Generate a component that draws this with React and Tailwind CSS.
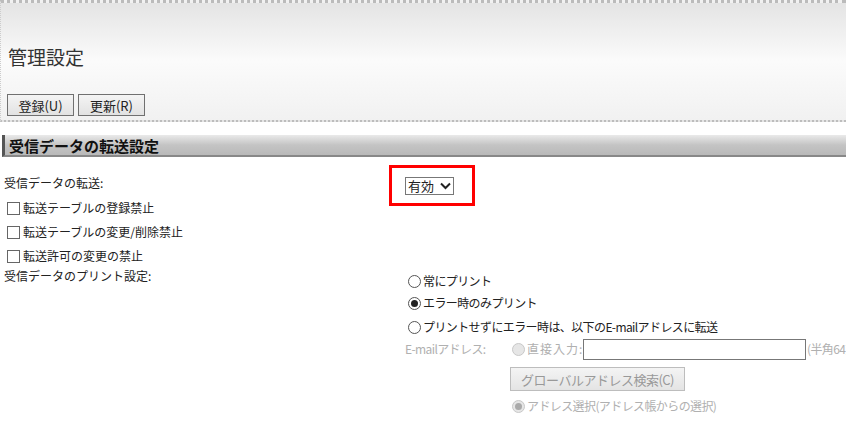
import React from 'react';

const font = { fontFamily: '"Noto Sans CJK JP", "Liberation Sans", sans-serif' };

function Radio({ checked, disabled }) {
  return (
    <span
      className={`inline-flex h-[13px] w-[13px] shrink-0 items-center justify-center rounded-full border ${
        disabled ? 'border-[#c8c8c8] bg-[#e6e6e6]' : 'border-[#555] bg-white'
      }`}
    >
      {checked && (
        <span className={`h-[7px] w-[7px] rounded-full ${disabled ? 'bg-[#aaa]' : 'bg-[#222]'}`} />
      )}
    </span>
  );
}

function Checkbox() {
  return <span className="inline-block h-[13px] w-[13px] shrink-0 border border-[#666] bg-white" />;
}

export default function App() {
  return (
    <div className="w-[846px] h-[434px] overflow-hidden bg-white text-[12px] text-[#222]" style={font}>
      {/* page header */}
      <div className="h-[122px] border-t-[3px] border-dotted border-t-[#bbb] border-l border-l-[#ccc] border-b-2 border-b-[#bdbdbd] bg-gradient-to-b from-[#e4e4e4] via-[#fbfbfb] to-[#f1f1f1] flex flex-col">
        <div className="pl-[7px] pt-[40px] text-[19px] leading-[28px] text-[#333]">管理設定</div>
        <div className="mt-[23px] flex gap-[4px] pl-[6px]">
          <button className="h-[22px] w-[67px] border border-[#707070] bg-gradient-to-b from-[#f4f4f4] to-[#e2e2e2] text-[13px] leading-none text-[#222]">
            登録(U)
          </button>
          <button className="h-[22px] w-[67px] border border-[#707070] bg-gradient-to-b from-[#f4f4f4] to-[#e2e2e2] text-[13px] leading-none text-[#222]">
            更新(R)
          </button>
        </div>
      </div>

      {/* section header */}
      <div className="ml-[2px] mt-[13px] flex h-[22px] items-center border-l-[3px] border-l-[#555] border-b-2 border-b-[#888] bg-gradient-to-b from-[#eaeaea] via-[#c4c4c4] to-[#b9b9b9] pl-[4px] text-[15px] font-bold leading-none text-[#111]">
        受信データの転送設定
      </div>

      {/* forwarding */}
      <div className="flex mt-[8px]">
        <div className="w-[389px] shrink-0 pl-[4px] pt-[9px] leading-[18px]">受信データの転送:</div>
        <div className="flex h-[41px] w-[86px] items-center border-[3px] border-[#ff0000] pl-[13px]">
          <div className="flex h-[18px] items-center gap-[6px] border border-[#777] bg-white px-[2px] text-[13px] leading-none">
            有効
            <svg width="11" height="8" viewBox="0 0 11 8">
              <path d="M1 1.5 L5.5 6 L10 1.5" fill="none" stroke="#222" strokeWidth="2" />
            </svg>
          </div>
        </div>
      </div>

      <div className="-mt-[10px] flex flex-col pl-[7px]">
        {['転送テーブルの登録禁止', '転送テーブルの変更/削除禁止', '転送許可の変更の禁止'].map((t) => (
          <label key={t} className="flex h-[24px] items-center gap-[3px]">
            <Checkbox />
            <span>{t}</span>
          </label>
        ))}
      </div>

      {/* print settings */}
      <div className="flex">
        <div className="w-[405px] shrink-0 pl-[4px] leading-[16px]">受信データのプリント設定:</div>
        <div className="flex flex-col tracking-[-0.6px]">
          <div className="mt-[2px] flex h-[22px] items-center gap-[2px] pl-[3px]">
            <Radio />
            <span>常にプリント</span>
          </div>
          <div className="flex h-[22px] items-center gap-[2px] pl-[3px]">
            <Radio checked />
            <span>エラー時のみプリント</span>
          </div>
          <div className="mt-[2px] flex h-[22px] items-center gap-[2px] pl-[3px] whitespace-nowrap">
            <Radio />
            <span>プリントせずにエラー時は、以下のE-mailアドレスに転送</span>
          </div>
          <div className="flex text-[#b0b0b0]">
            <div className="w-[107px] shrink-0 leading-[22px]">E-mailアドレス:</div>
            <div className="flex flex-col">
              <div className="flex h-[22px] items-center whitespace-nowrap">
                <Radio disabled />
                <span className="ml-[2px] w-[56px] tracking-[1px]">直接入力:</span>
                <span className="inline-block h-[21px] w-[223px] shrink-0 border border-[#777] bg-white" />
                <span className="ml-[1px]">(半角64文字以内)</span>
              </div>
              <button className="mt-[7px] h-[24px] w-[175px] -ml-[2px] border border-[#bdbdbd] bg-gradient-to-b from-[#f4f4f4] to-[#e4e4e4] text-[13px] tracking-[-0.5px] leading-none text-[#999]">
                グローバルアドレス検索(C)
              </button>
              <div className="mt-[4px] flex h-[22px] items-center gap-[2px]">
                <Radio checked disabled />
                <span>アドレス選択(アドレス帳からの選択)</span>
              </div>
            </div>
          </div>
        </div>
      </div>
    </div>
  );
}
